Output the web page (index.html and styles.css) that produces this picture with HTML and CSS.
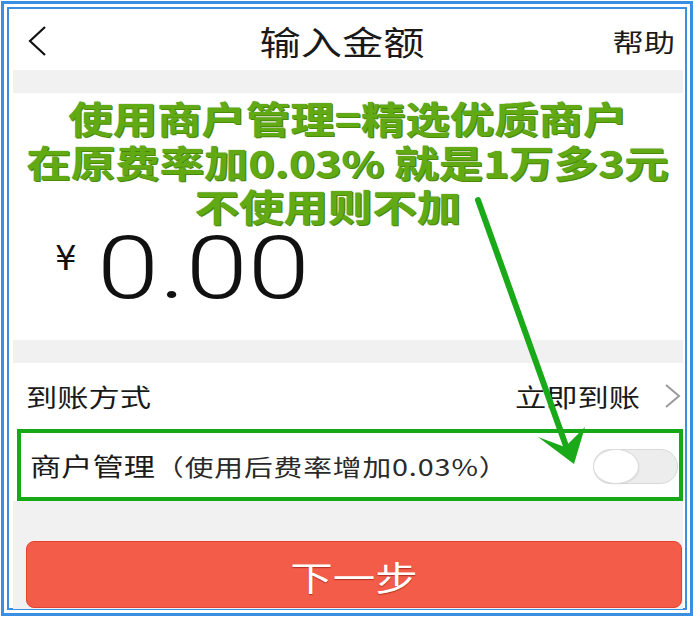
FILE: index.html
```html
<!DOCTYPE html>
<html lang="zh-CN">
<head>
<meta charset="utf-8">
<title>输入金额</title>
<link rel="stylesheet" href="styles.css">
</head>
<body>
<div class="frame-outer">
  <div class="frame-inner">
    <div class="screen">
      <header class="nav">
        <svg class="back" width="20" height="32" viewBox="0 0 20 32"><polyline points="18,2 3,16 18,30" fill="none" stroke="#111" stroke-width="2.2"/></svg>
        <div class="title">输入金额</div>
        <div class="help">帮助</div>
      </header>
      <div class="band"></div>
      <section class="amount">
        <div class="amount-line">
          <span class="yen">¥</span>
          <span class="num">0.00</span>
        </div>
        <div class="note">
          <div class="note-line"><span class="wide">使用商户管理=精选优质商户</span></div>
          <div class="note-line"><span class="wide">在原费率加0.03% 就是1万多3元</span></div>
          <div class="note-line last"><span class="wide">不使用则不加</span></div>
        </div>
      </section>
      <div class="band"></div>
      <div class="row">
        <span class="label">到账方式</span>
        <span class="value"><span class="value-text">立即到账</span>
          <svg class="chev" width="17" height="26" viewBox="0 0 17 26"><polyline points="2,2 15,13 2,24" fill="none" stroke="#9a9a9a" stroke-width="2"/></svg>
        </span>
      </div>
      <div class="merchant-wrap">
        <div class="merchant">
          <span class="label">商户管理<span class="sub">（使用后费率增加0.03%）</span></span>
          <span class="toggle"><span class="knob"></span></span>
        </div>
      </div>
      <div class="bottom">
        <div class="btn"><span class="btn-text">下一步</span></div>
      </div>
    </div>
  </div>
</div>
<svg class="arrow" width="700" height="622" viewBox="0 0 700 622">
  <line x1="478" y1="200" x2="566" y2="446" stroke="#19a919" stroke-width="6" stroke-linecap="round"/>
  <polygon points="538,437 565,447 585,427 574,464" fill="#19a919"/>
</svg>
</body>
</html>
```
FILE: styles.css
```css
html, body {
  margin: 0;
  padding: 0;
}
body {
  width: 700px;
  height: 622px;
  background: #fff;
  position: relative;
  overflow: hidden;
  font-family: "Noto Sans CJK SC", "Noto Sans", sans-serif;
  color: #1a1a1a;
}
.frame-outer {
  margin: 1px 7px 0 1px;
  border: 3px solid #3b8fe3;
  padding: 3px;
  height: 603px;
}
.frame-inner {
  border: 2px solid #3b8fe3;
  height: 599px;
  background: #fff;
}
.screen {
  padding: 2px 2px 0 4px;
  display: flex;
  flex-direction: column;
}
.nav {
  height: 59px;
  display: grid;
  grid-template-columns: 1fr auto 1fr;
  align-items: center;
  padding: 0 8px 0 14px;
  background: #fff;
}
.back {
  display: block;
  width: 20px;
  height: 32px;
}
.title {
  font-size: 33px;
  line-height: 38px;
  color: #1a1a1a;
  transform: scaleX(1.25);
  transform-origin: center;
  margin-right: 18px;
}
.help {
  justify-self: end;
  font-size: 25px;
  line-height: 30px;
  transform: scaleX(1.25);
  transform-origin: right center;
}
.band {
  height: 23px;
  background: #f1f1f1;
}
.amount {
  position: relative;
  height: 247px;
  box-sizing: border-box;
  padding: 131px 0 0 42px;
  background: #fff;
}
.amount-line {
  display: flex;
  align-items: flex-start;
}
.yen {
  font-family: "DejaVu Sans", sans-serif;
  font-size: 34px;
  line-height: 34px;
  margin-top: 17px;
  color: #111;
}
.num {
  font-family: Roboto, "Lato", sans-serif;
  font-weight: 300;
  font-size: 88px;
  line-height: 88px;
  margin-left: 20px;
  color: #111;
  transform: scaleX(1.27);
  transform-origin: left center;
}
.note {
  position: absolute;
  top: 3px;
  left: 0;
  right: 0;
  text-align: center;
  font-weight: 700;
  font-size: 37px;
  line-height: 44px;
  color: #62aa14;
  text-shadow: 0 0 1px #3f7d05, 1px 1px 0 #4c8c0a;
}
.wide {
  display: inline-block;
  transform: scaleX(1.2);
  transform-origin: center;
}
.note-line.last {
  padding-right: 40px;
}
.row {
  height: 66px;
  display: flex;
  align-items: center;
  justify-content: space-between;
  padding: 0 2px 0 13px;
  background: #fff;
}
.label {
  display: inline-block;
  font-size: 25px;
  line-height: 32px;
  color: #1a1a1a;
  transform: scaleX(1.25);
  transform-origin: left center;
  white-space: nowrap;
}
.value {
  display: flex;
  align-items: center;
}
.value-text {
  display: inline-block;
  font-size: 25px;
  line-height: 32px;
  color: #1a1a1a;
  transform: scaleX(1.25);
  transform-origin: right center;
}
.chev {
  display: block;
  margin-left: 24px;
}
.merchant-wrap {
  background: #fff;
  padding-left: 4px;
}
.merchant {
  height: 64px;
  border: 4px solid #17a817;
  display: flex;
  align-items: center;
  justify-content: space-between;
  padding: 0 0 0 9px;
}
.sub {
  font-size: 23px;
  letter-spacing: 0.7px;
  color: #2a2a2a;
}
.toggle {
  width: 83px;
  height: 33px;
  border: 1px solid #d9d9d9;
  border-radius: 18px;
  background: #ededed;
  position: relative;
  margin-right: 1px;
  margin-top: 2px;
}
.knob {
  position: absolute;
  left: 0;
  top: 0;
  width: 44px;
  height: 33px;
  border-radius: 50%;
  background: #fff;
  box-shadow: 0 0 0 1px #dcdcdc, 1px 1px 2px rgba(0,0,0,0.12);
}
.bottom {
  height: 108px;
  box-sizing: border-box;
  background: #f1f1f1;
  padding: 40px 1px 0 13px;
}
.btn {
  height: 65px;
  border: 1px solid #e5412f;
  border-radius: 8px;
  background: #f25c49;
  display: flex;
  align-items: center;
  justify-content: center;
}
.btn-text {
  display: inline-block;
  font-size: 34px;
  line-height: 40px;
  color: #fff;
  text-shadow: 0 1px 1px rgba(150, 30, 20, 0.7);
  transform: scaleX(1.25);
  margin-top: 4px;
}
.arrow {
  position: absolute;
  left: 0;
  top: 0;
  pointer-events: none;
}
```
